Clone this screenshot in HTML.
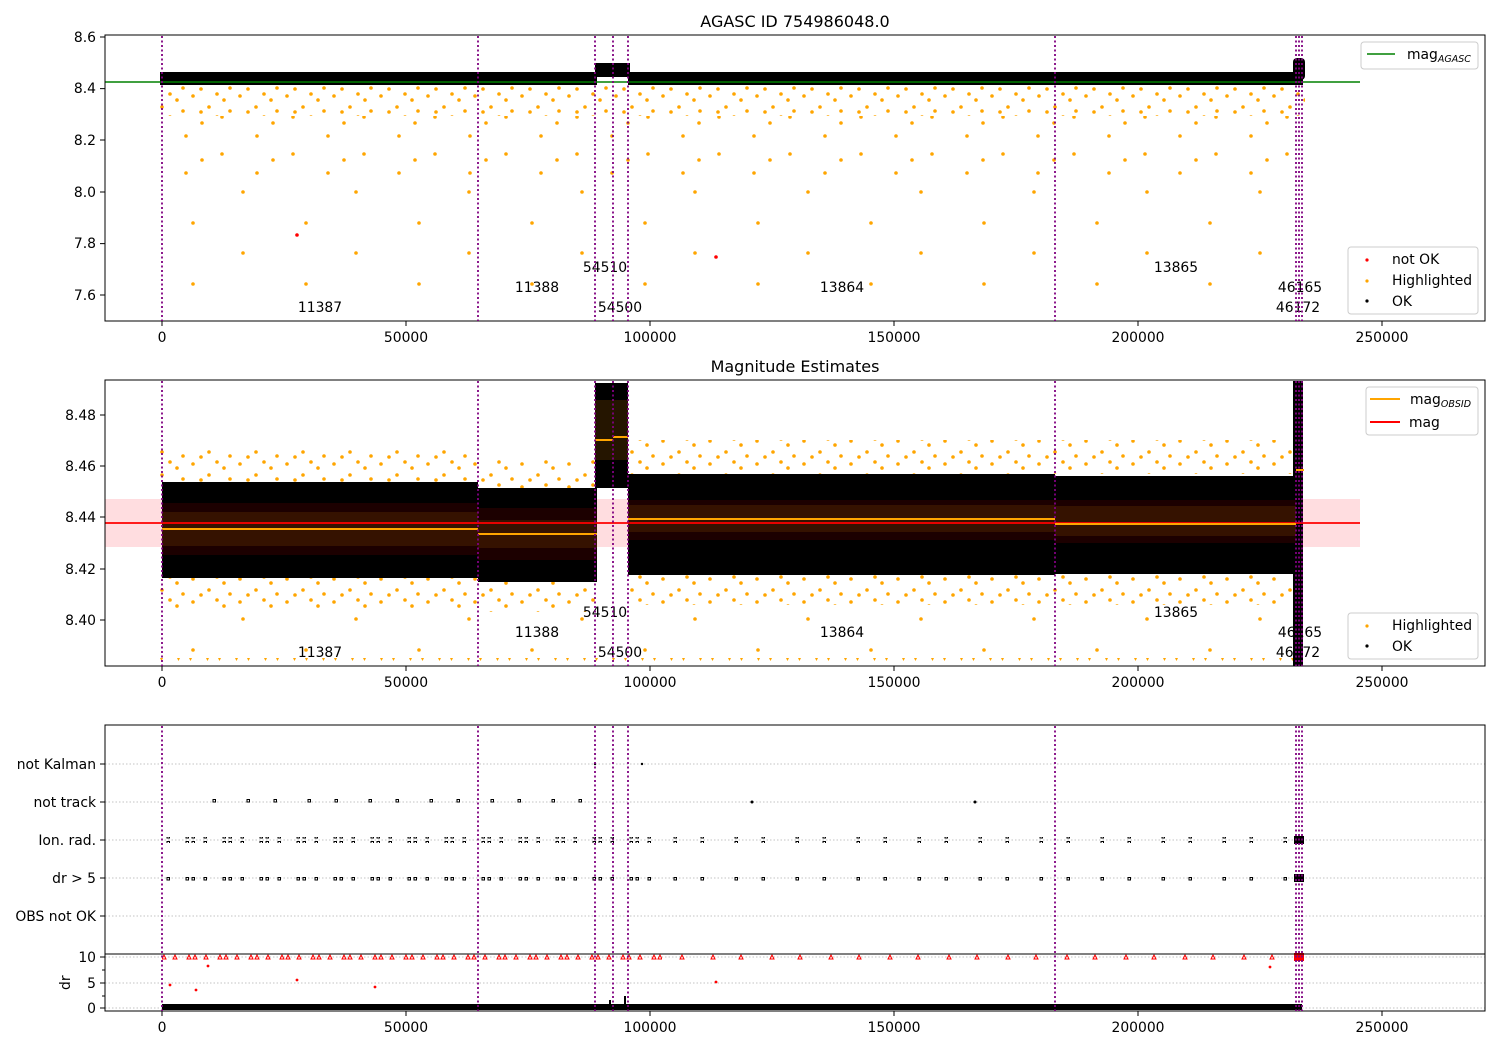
<!DOCTYPE html>
<html><head><meta charset="utf-8"><style>
html,body{margin:0;padding:0;background:#fff}
svg{display:block;font-family:"DejaVu Sans","Liberation Sans",sans-serif}
</style></head><body>
<svg width="1500" height="1050" viewBox="0 0 1500 1050" xmlns="http://www.w3.org/2000/svg">
<defs>
<pattern id="o1" width="47" height="23" patternUnits="userSpaceOnUse">
<circle cx="5" cy="4" r="1.8" fill="orange"/><circle cx="21" cy="15" r="1.8" fill="orange"/><circle cx="36" cy="8" r="1.8" fill="orange"/><circle cx="42" cy="19" r="1.8" fill="orange"/><circle cx="13" cy="20" r="1.8" fill="orange"/><circle cx="29" cy="2" r="1.8" fill="orange"/>
</pattern>
<pattern id="o2" width="71" height="37" patternUnits="userSpaceOnUse">
<circle cx="9" cy="6" r="1.8" fill="orange"/><circle cx="44" cy="25" r="1.8" fill="orange"/><circle cx="60" cy="12" r="1.8" fill="orange"/>
</pattern>
<pattern id="o3" width="113" height="61" patternUnits="userSpaceOnUse">
<circle cx="17" cy="9" r="1.8" fill="orange"/><circle cx="80" cy="40" r="1.8" fill="orange"/>
</pattern>
<pattern id="tri" width="29" height="8" patternUnits="userSpaceOnUse">
<path d="M2 0h5l-2.5 5z M14 0h5l-2.5 5z" fill="orange"/>
</pattern>
<pattern id="rw" width="37" height="6" patternUnits="userSpaceOnUse">
<rect x="1" y="1.5" width="2.5" height="2.5" fill="none" stroke="#000" stroke-width="1"/><rect x="7" y="1.5" width="2.5" height="2.5" fill="none" stroke="#000" stroke-width="1"/><rect x="19" y="1.5" width="2.5" height="2.5" fill="none" stroke="#000" stroke-width="1"/>
</pattern>
<pattern id="rw2" width="61" height="6" patternUnits="userSpaceOnUse">
<rect x="3" y="1.5" width="2.5" height="2.5" fill="none" stroke="#000" stroke-width="1"/><rect x="30" y="1.5" width="2.5" height="2.5" fill="none" stroke="#000" stroke-width="1"/>
</pattern>
<pattern id="rd" width="31" height="6" patternUnits="userSpaceOnUse">
<path d="M1 5l2-4 2 4z M7 5l2-4 2 4z M18 5l2-4 2 4z" fill="none" stroke="red" stroke-width="1"/>
</pattern>
<pattern id="rd2" width="59" height="6" patternUnits="userSpaceOnUse">
<path d="M3 5l2-4 2 4z M31 5l2-4 2 4z" fill="none" stroke="red" stroke-width="1"/>
</pattern>
</defs>

<!-- ============ PANEL 1 ============ -->
<text x="795" y="27" font-size="16" text-anchor="middle">AGASC ID 754986048.0</text>
<rect x="160" y="86" width="1145" height="30" fill="url(#o1)"/>
<rect x="160" y="116" width="1145" height="60" fill="url(#o2)"/>
<rect x="160" y="176" width="1145" height="120" fill="url(#o3)"/>
<rect x="160" y="68" width="1145" height="4" fill="url(#o2)"/>
<rect x="160" y="72" width="437" height="13" fill="#000"/>
<rect x="628" y="72" width="675" height="13" fill="#000"/>
<rect x="595" y="63" width="35" height="14" fill="#000"/>
<rect x="1293" y="58" width="12" height="22" fill="#000" rx="4"/>
<circle cx="297" cy="235" r="1.8" fill="red"/><circle cx="716" cy="257" r="1.8" fill="red"/>
<line x1="105" y1="82" x2="1360" y2="82" stroke="green" stroke-width="1.5"/>
<rect x="105" y="35" width="1380" height="286" fill="none" stroke="#000" stroke-width="1"/>
<g font-size="13.9" fill="#000">
<text x="605" y="272" text-anchor="middle">54510</text>
<text x="537" y="292" text-anchor="middle">11388</text>
<text x="842" y="292" text-anchor="middle">13864</text>
<text x="1176" y="272" text-anchor="middle">13865</text>
<text x="1300" y="292" text-anchor="middle">46165</text>
<text x="320" y="312" text-anchor="middle">11387</text>
<text x="620" y="312" text-anchor="middle">54500</text>
<text x="1298" y="312" text-anchor="middle">46172</text>
</g>
<g font-size="13.9" text-anchor="end">
<text x="96" y="42">8.6</text><text x="96" y="93">8.4</text><text x="96" y="145">8.2</text><text x="96" y="197">8.0</text><text x="96" y="248">7.8</text><text x="96" y="300">7.6</text>
</g>
<path d="M100 37h5M100 88.6h5M100 140h5M100 192h5M100 243.6h5M100 295h5" stroke="#000"/>
<rect x="1361" y="42" width="117" height="27" rx="3" fill="#fff" fill-opacity="0.85" stroke="#ccc"/>
<line x1="1367" y1="54" x2="1395" y2="54" stroke="green" stroke-width="1.5"/>
<text x="1407" y="59" font-size="13.9">mag<tspan font-size="9.5" font-style="italic" dy="3">AGASC</tspan></text>
<rect x="1348" y="247" width="130" height="67" rx="3" fill="#fff" fill-opacity="0.85" stroke="#ccc"/>
<circle cx="1367" cy="260" r="1.6" fill="red"/><text x="1392" y="264" font-size="13.9">not OK</text>
<circle cx="1367" cy="281" r="1.6" fill="orange"/><text x="1392" y="285" font-size="13.9">Highlighted</text>
<circle cx="1367" cy="301" r="1.6" fill="#000"/><text x="1392" y="306" font-size="13.9">OK</text>

<!-- ============ PANEL 2 ============ -->
<text x="795" y="372" font-size="16" text-anchor="middle">Magnitude Estimates</text>
<rect x="105" y="499" width="1255" height="48" fill="#ffdde0"/>
<rect x="160" y="450" width="318" height="32" fill="url(#o1)"/>
<rect x="160" y="578" width="318" height="30" fill="url(#o1)"/>
<rect x="478" y="460" width="119" height="28" fill="url(#o1)"/>
<rect x="478" y="582" width="119" height="30" fill="url(#o1)"/>
<rect x="628" y="440" width="670" height="34" fill="url(#o1)"/>
<rect x="628" y="575" width="670" height="30" fill="url(#o1)"/>
<rect x="160" y="608" width="1140" height="52" fill="url(#o3)"/>
<rect x="160" y="658" width="1140" height="6" fill="url(#tri)"/>
<rect x="162" y="482" width="316" height="96" fill="#000"/>
<rect x="478" y="488" width="119" height="94" fill="#000"/>
<rect x="595" y="383" width="33" height="105" fill="#000"/>
<rect x="628" y="474" width="427" height="101" fill="#000"/>
<rect x="1055" y="476" width="241" height="98" fill="#000"/>
<rect x="1293" y="381" width="10" height="285" fill="#000"/>
<rect x="162" y="503" width="316" height="52" fill="#1c0000"/>
<rect x="162" y="512" width="316" height="34" fill="#351200"/>
<rect x="478" y="508" width="119" height="52" fill="#1c0000"/>
<rect x="478" y="520" width="119" height="28" fill="#351200"/>
<rect x="628" y="500" width="427" height="40" fill="#1c0000"/>
<rect x="628" y="505" width="427" height="27" fill="#351200"/>
<rect x="1055" y="500" width="241" height="43" fill="#1c0000"/>
<rect x="1055" y="506" width="241" height="30" fill="#351200"/>
<rect x="595" y="400" width="33" height="60" fill="#251500"/>
<line x1="105" y1="523" x2="1360" y2="523" stroke="red" stroke-width="1.8"/>
<path d="M162 529H478M478 534H597M595 440H613M613 437H628M628 519H1055M1055 524H1296M1296 470H1304" stroke="orange" stroke-width="2"/>
<rect x="105" y="380" width="1380" height="286" fill="none" stroke="#000"/>
<g font-size="13.9">
<text x="605" y="617" text-anchor="middle">54510</text>
<text x="537" y="637" text-anchor="middle">11388</text>
<text x="842" y="637" text-anchor="middle">13864</text>
<text x="1176" y="617" text-anchor="middle">13865</text>
<text x="1300" y="637" text-anchor="middle">46165</text>
<text x="320" y="657" text-anchor="middle">11387</text>
<text x="620" y="657" text-anchor="middle">54500</text>
<text x="1298" y="657" text-anchor="middle">46172</text>
</g>
<g font-size="13.9" text-anchor="end">
<text x="96" y="420">8.48</text><text x="96" y="471">8.46</text><text x="96" y="522">8.44</text><text x="96" y="574">8.42</text><text x="96" y="625">8.40</text>
</g>
<path d="M100 415h5M100 466h5M100 517h5M100 569h5M100 620h5" stroke="#000"/>
<rect x="1366" y="387" width="112" height="48" rx="3" fill="#fff" fill-opacity="0.85" stroke="#ccc"/>
<line x1="1370" y1="399" x2="1400" y2="399" stroke="orange" stroke-width="2"/>
<text x="1410" y="404" font-size="13.9">mag<tspan font-size="9.5" font-style="italic" dy="3">OBSID</tspan></text>
<line x1="1370" y1="422" x2="1400" y2="422" stroke="red" stroke-width="2"/>
<text x="1409" y="427" font-size="13.9">mag</text>
<rect x="1348" y="613" width="130" height="46" rx="3" fill="#fff" fill-opacity="0.85" stroke="#ccc"/>
<circle cx="1367" cy="626" r="1.6" fill="orange"/><text x="1392" y="630" font-size="13.9">Highlighted</text>
<circle cx="1367" cy="646" r="1.6" fill="#000"/><text x="1392" y="651" font-size="13.9">OK</text>

<!-- ============ PANEL 3 ============ -->
<g stroke="#b0b0b0" stroke-dasharray="1.5 2" stroke-width="0.8">
<path d="M105 764H1485M105 802H1485M105 840H1485M105 878H1485M105 916H1485M105 957H1485M105 983H1485M105 1008H1485"/>
</g>
<rect x="190" y="799" width="400" height="6" fill="url(#rw2)"/>
<rect x="162" y="837" width="500" height="6" fill="url(#rw)"/>
<rect x="662" y="837" width="630" height="6" fill="url(#rw2)"/>
<rect x="162" y="875" width="500" height="6" fill="url(#rw)"/>
<rect x="662" y="875" width="630" height="6" fill="url(#rw2)"/>
<rect x="1294" y="836" width="10" height="8" fill="#000"/><rect x="1294" y="874" width="10" height="8" fill="#000"/>
<circle cx="595" cy="764" r="1.2"/><circle cx="642" cy="764" r="1.2"/><circle cx="752" cy="802" r="1.5"/><circle cx="975" cy="802" r="1.5"/>
<rect x="162" y="954" width="500" height="6" fill="url(#rd)"/>
<rect x="662" y="954" width="630" height="6" fill="url(#rd2)"/>
<rect x="1294" y="953" width="10" height="8" fill="red"/>
<circle cx="170" cy="985" r="1.4" fill="red"/><circle cx="208" cy="966" r="1.4" fill="red"/><circle cx="196" cy="990" r="1.4" fill="red"/><circle cx="297" cy="980" r="1.4" fill="red"/><circle cx="716" cy="982" r="1.4" fill="red"/><circle cx="1270" cy="967" r="1.4" fill="red"/><circle cx="375" cy="987" r="1.4" fill="red"/>
<rect x="162" y="1004" width="1140" height="6" fill="#000"/>
<path d="M610 1000v4M625 996v8" stroke="#000" stroke-width="2"/>
<line x1="105" y1="954" x2="1485" y2="954" stroke="#000"/>
<rect x="105" y="725" width="1380" height="286" fill="none" stroke="#000"/>
<g font-size="13.9" text-anchor="end">
<text x="96" y="769">not Kalman</text><text x="96" y="807">not track</text><text x="96" y="845">Ion. rad.</text><text x="96" y="883">dr &gt; 5</text><text x="96" y="921">OBS not OK</text>
<text x="96" y="962">10</text><text x="96" y="988">5</text><text x="96" y="1013">0</text>
</g>
<path d="M100 764h5M100 802h5M100 840h5M100 878h5M100 916h5M100 957h5M100 983h5M100 1008h5M102 970h3M102 996h3" stroke="#000"/>
<text x="0" y="0" font-size="13.9" transform="translate(70 990) rotate(-90)">dr</text>

<g stroke="#800080" stroke-width="1.8" stroke-dasharray="2 2.5">
<path d="M162 36V321M478 36V321M595 36V321M613 36V321M628 36V321M1055 36V321M1296 36V321M1299 36V321M1302 36V321"/>
<path d="M162 381V666M478 381V666M595 381V666M613 381V666M628 381V666M1055 381V666M1296 381V666M1299 381V666M1302 381V666"/>
<path d="M162 726V1011M478 726V1011M595 726V1011M613 726V1011M628 726V1011M1055 726V1011M1296 726V1011M1299 726V1011M1302 726V1011"/>
</g>

<g stroke="#000">
<path d="M162 321v5M406 321v5M650 321v5M894 321v5M1138 321v5M1382 321v5"/>
<path d="M162 666v5M406 666v5M650 666v5M894 666v5M1138 666v5M1382 666v5"/>
<path d="M162 1011v5M406 1011v5M650 1011v5M894 1011v5M1138 1011v5M1382 1011v5"/>
</g>
<g font-size="13.9" text-anchor="middle">
<text x="162" y="342">0</text><text x="406" y="342">50000</text><text x="650" y="342">100000</text><text x="894" y="342">150000</text><text x="1138" y="342">200000</text><text x="1382" y="342">250000</text>
<text x="162" y="687">0</text><text x="406" y="687">50000</text><text x="650" y="687">100000</text><text x="894" y="687">150000</text><text x="1138" y="687">200000</text><text x="1382" y="687">250000</text>
<text x="162" y="1032">0</text><text x="406" y="1032">50000</text><text x="650" y="1032">100000</text><text x="894" y="1032">150000</text><text x="1138" y="1032">200000</text><text x="1382" y="1032">250000</text>
</g>
</svg>
</body></html>
